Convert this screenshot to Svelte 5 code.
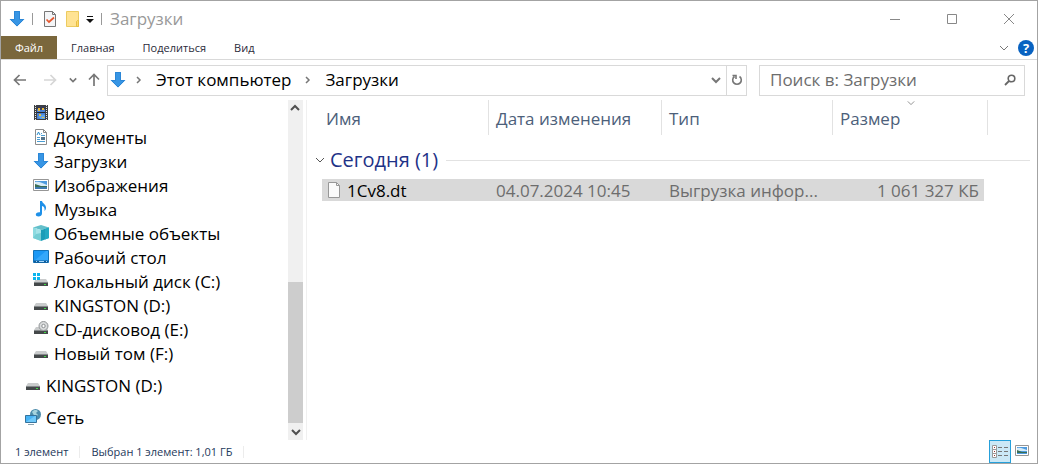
<script>
  const tabs = ['Главная', 'Поделиться', 'Вид'];
  const places = [
    { icon: 'video', name: 'Видео' },
    { icon: 'document', name: 'Документы' },
    { icon: 'download', name: 'Загрузки' },
    { icon: 'picture', name: 'Изображения' },
    { icon: 'music', name: 'Музыка' },
    { icon: 'cube', name: 'Объемные объекты' },
    { icon: 'desktop', name: 'Рабочий стол' },
    { icon: 'system', name: 'Локальный диск (C:)' },
    { icon: 'drive', name: 'KINGSTON (D:)' },
    { icon: 'cd', name: 'CD-дисковод (E:)' },
    { icon: 'drive', name: 'Новый том (F:)' }
  ];
  const roots = [
    { icon: 'drive', name: 'KINGSTON (D:)' },
    { icon: 'network', name: 'Сеть' }
  ];
  let query = $state('');
</script>

{#snippet driveBody()}
  <path d="M3 6h10l2 3H1z" fill="#c9cbcc" />
  <path d="M1 9h14v4H1z" fill="#44484a" />
  <path d="M1 9h14v1H1z" fill="#85898b" />
  <path d="M11 11h2v1h-2z" fill="#3fdc45" />
{/snippet}

{#snippet icon(name)}
  <svg class="icon" width="16" height="16" viewBox="0 0 16 16" aria-hidden="true">
    {#if name === 'download'}
      <path d="M5 0h6v8h4.500L8 15.500.5 8H5z" fill="#3795e4" />
      <path d="M5.500.5h5v8h4L8 15 1.500 8.500h4z" fill="none" stroke="#2b86d6" />
    {:else if name === 'video'}
      <path d="M1 0h14v15H1z" fill="#3c3f42" />
      <path d="M4 1h8v13H4z" fill="#4a7fd0" />
      <path d="M4 1h8v3l-4 1-4-1z" fill="#3a3c50" />
      <path d="M5 3h2v3H5zM9 3h2v2H9z" fill="#e8b83a" />
      <path d="M4 7h8v1H4z" fill="#22262c" />
      <path d="M5 12c2-3 5-3 7-2v4H8z" fill="#5fa3ea" />
      <path d="M6 9h2v2H6zM9 12h2v1H9z" fill="#e0c040" />
      <path d="M2.500 0v15M13.500 0v15" stroke="#e8e8e8" stroke-dasharray="1 1" />
    {:else if name === 'document'}
      <path d="M2.500.5h8l3 3v12h-11z" fill="#fff" stroke="#8c8c8c" />
      <path d="M10.500.5v3h3" fill="none" stroke="#8c8c8c" />
      <path d="M4 6l1.500-3L7 6" fill="none" stroke="#268ac9" />
      <path d="M8 4.500h1M8 6.500h4M4 8.500h3M4 10.500h3M4 12.500h8" stroke="#4a9dd3" />
      <path d="M8 8h4v3H8z" fill="#56748a" />
    {:else if name === 'picture'}
      <path d="M.5 2.500h15v11H.5z" fill="#fff" stroke="#969696" />
      <path d="M2 4h12v8H2z" fill="#4d9ade" />
      <path d="M2 5c4-1 7 1 12 3v1H2z" fill="#d6ebf8" />
      <path d="M2 7l3 1 3 1h6v1H2z" fill="#3b6e54" />
      <path d="M2 10h12v2H2z" fill="#3d79ae" />
    {:else if name === 'music'}
      <path d="M7 0h2c.5 2.500 4 3.500 4 6.500 0 1.500-.5 2.500-1.500 3.500.5-3-.5-4.500-2.500-5v7.500c0 2-1.500 3-3.500 3-1.700 0-2.700-.8-2.700-2s1.300-2.500 4.200-2.200z" fill="#1e90e8" />
    {:else if name === 'cube'}
      <path d="M0 2.500L8 0l8 2.500L8 5z" fill="#63bfca" />
      <path d="M0 2.500L8 5v11L0 13z" fill="#a5e3e8" />
      <path d="M0 2.500L3 3.500v10L0 13z" fill="#8cdae0" />
      <path d="M3 9l5-1v8l-8-3z" fill="#74cdd4" />
      <path d="M8 5l8-2.500V13l-8 3z" fill="#1a9db8" />
      <path d="M12 4l4-1.500V13l-4 1.500z" fill="#22a9c2" />
    {:else if name === 'desktop'}
      <path d="M.5 1.500h15v12H.5z" fill="#1b98f5" stroke="#1272b8" />
      <path d="M1 12L13 2h2v10H1z" fill="#34a8fb" />
      <path d="M1 11.500h14v2H1z" fill="#105995" />
      <path d="M3 12.500h1M6 12.500h5M13 12.500h1" stroke="#a8d9fb" />
    {:else if name === 'system'}
      {@render driveBody()}
      <path d="M0 0h7v7H0z" fill="#fff" />
      <path d="M0 0h3v3H0zM4 0h3v3H4zM0 4h3v3H0zM4 4h3v3H4z" fill="#0bb5ee" />
    {:else if name === 'drive'}
      {@render driveBody()}
    {:else if name === 'cd'}
      {@render driveBody()}
      <circle cx="10.500" cy="5" r="4.500" fill="#d9dbdc" stroke="#909496" />
      <circle cx="10.500" cy="5" r="1.700" fill="#fff" stroke="#8b8f91" />
    {:else if name === 'network'}
      <circle cx="10.500" cy="5.500" r="5.500" fill="#4c8cab" />
      <path d="M7 3c2-3 5-2 6-1l-2 2 2 2-3 2z" fill="#a6d3dd" />
      <path d="M.5 6.500h11v7H.5z" fill="#47b3f5" stroke="#34739d" />
      <path d="M1 13l9-6h1v6z" fill="#70c9fa" />
      <path d="M3 15.500h6" stroke="#8ba3b0" />
    {:else if name === 'file'}
      <path d="M2.500.5h8l3 3v12h-11z" fill="#fafafa" stroke="#979797" />
      <path d="M10.500.5v3h3" fill="none" stroke="#979797" />
    {:else if name === 'properties'}
      <path d="M2.500.5h8l3 3v12h-11z" fill="#f4f5f7" stroke="#777" />
      <path d="M10.500.5v3h3" fill="none" stroke="#777" />
      <path d="M4.500 8.500l2.500 2.500 5-4.500" fill="none" stroke="#e4572e" stroke-width="1.700" />
    {:else if name === 'folder'}
      <path d="M1.500.5h12v15h-12z" fill="#ffe393" stroke="#eccb60" />
      <path d="M12.500 9.500h1v6h-2v-5z" fill="#ffd968" stroke="#e6be45" />
    {/if}
  </svg>
{/snippet}

{#snippet chevron(size, weight)}
  <svg class="chevron" width={size} height="8" viewBox="0 0 10 8" aria-hidden="true">
    <path d="M1 2l4 4 4-4" fill="none" stroke="currentColor" stroke-width={weight} />
  </svg>
{/snippet}

{#snippet crumbArrow()}
  <svg width="8" height="10" viewBox="0 0 8 10" aria-hidden="true">
    <path d="M2 2l3 3-3 3" fill="none" stroke="#777" stroke-width="1.500" />
  </svg>
{/snippet}

<div class="window">
  <header class="title">
    <div class="quick">
      {@render icon('download')}
      <span class="bar"></span>
      <button class="first" aria-label="Свойства">{@render icon('properties')}</button>
      <button aria-label="Новая папка">{@render icon('folder')}</button>
      <button class="more" aria-label="Настройка панели быстрого доступа">
        <svg width="8" height="8" viewBox="0 0 8 8"><path d="M1 1h6v1H1zM0 4h8L4 8z" fill="#111" /></svg>
      </button>
      <span class="bar"></span>
    </div>
    <h1>Загрузки</h1>
    <div class="controls">
      <button aria-label="Свернуть">
        <svg width="12" height="12" viewBox="0 0 12 12"><path d="M1 6.500h10" stroke="#888" /></svg>
      </button>
      <button aria-label="Развернуть">
        <svg width="12" height="12" viewBox="0 0 12 12"><path d="M1.500 1.500h9v9h-9z" fill="none" stroke="#888" /></svg>
      </button>
      <button aria-label="Закрыть">
        <svg width="12" height="12" viewBox="0 0 12 12"><path d="M1 1l10 10M11 1L1 11" stroke="#888" /></svg>
      </button>
    </div>
  </header>

  <nav class="ribbon" aria-label="Лента">
    <button class="file">Файл</button>
    {#each tabs as tab}
      <button>{tab}</button>
    {/each}
    <div class="help">
      <button aria-label="Развернуть ленту">{@render chevron(10, 1)}</button>
      <button class="question" aria-label="Справка">?</button>
    </div>
  </nav>

  <div class="address">
    <div class="history">
      <button class="back" aria-label="Назад">
        <svg width="14" height="14" viewBox="0 0 14 14"><path d="M13 7H2M6.500 2L1.500 7l5 5" fill="none" stroke="#777" stroke-width="1.700" /></svg>
      </button>
      <button aria-label="Вперед" disabled>
        <svg width="14" height="14" viewBox="0 0 14 14"><path d="M1 7h11M7.500 2l5 5-5 5" fill="none" stroke="#d6d6d6" stroke-width="1.700" /></svg>
      </button>
      <button class="recent" aria-label="Последние расположения">{@render chevron(8, 2)}</button>
      <button aria-label="Вверх">
        <svg width="14" height="14" viewBox="0 0 14 14"><path d="M7 13V2M2 6.500l5-5 5 5" fill="none" stroke="#777" stroke-width="1.700" /></svg>
      </button>
    </div>
    <div class="path">
      {@render icon('download')}
      {@render crumbArrow()}
      <a href="#computer">Этот компьютер</a>
      {@render crumbArrow()}
      <a href="#downloads">Загрузки</a>
      <button class="drop" aria-label="Предыдущие расположения">{@render chevron(10, 2)}</button>
      <button class="refresh" aria-label="Обновить">
        <svg width="12" height="12" viewBox="0 0 12 12"><path d="M8.500 2.500a4.300 4.300 0 1 1-5 0M1.500 1.500h3.500V5" fill="none" stroke="#777" stroke-width="1.600" /></svg>
      </button>
    </div>
    <label class="search">
      <input type="text" bind:value={query} placeholder="Поиск в: Загрузки" aria-label="Поиск в: Загрузки" />
      <svg width="12" height="12" viewBox="0 0 12 12" aria-hidden="true">
        <circle cx="7.500" cy="4.500" r="3.300" fill="none" stroke="#666" stroke-width="1.600" />
        <path d="M5 7L1 11" stroke="#666" stroke-width="1.800" />
      </svg>
    </label>
  </div>

  <div class="body">
    <aside>
      <ul>
        {#each places as place}
          <li><a href="#place">{@render icon(place.icon)}{place.name}</a></li>
        {/each}
      </ul>
      <ul class="roots">
        {#each roots as place}
          <li><a href="#place">{@render icon(place.icon)}{place.name}</a></li>
        {/each}
      </ul>
    </aside>
    <div class="scroll">
      <button class="up" aria-label="Прокрутить вверх">{@render chevron(10, 2)}</button>
      <div class="track"></div>
      <div class="thumb"></div>
      <button aria-label="Прокрутить вниз">{@render chevron(10, 2)}</button>
    </div>

    <main>
      <table>
        <colgroup><col class="c-name" /><col class="c-date" /><col class="c-type" /><col class="c-size" /><col /></colgroup>
        <thead>
          <tr>
            <th scope="col">Имя</th>
            <th scope="col">Дата изменения</th>
            <th scope="col">Тип</th>
            <th scope="col" aria-sort="descending">Размер<span class="sort">{@render chevron(8, 1)}</span></th>
            <td></td>
          </tr>
        </thead>
        <tbody>
          <tr class="group">
            <th colspan="5" scope="rowgroup">
              <div>{@render chevron(12, 1)}<span>Сегодня (1)</span></div>
            </th>
          </tr>
          <tr class="selected">
            <td><div class="filename">{@render icon('file')}1Cv8.dt</div></td>
            <td>04.07.2024 10:45</td>
            <td>Выгрузка инфор...</td>
            <td class="size">1 061 327 КБ</td>
            <td></td>
          </tr>
        </tbody>
      </table>
    </main>
  </div>

  <footer>
    <span>1 элемент</span>
    <span>Выбран 1 элемент: 1,01 ГБ</span>
    <div class="views">
      <button class="active" aria-label="Таблица">
        <svg width="18" height="14" viewBox="0 0 18 14">
          <path d="M1.500.5h4v4h-4zM1.500 4.500h4v4h-4zM1.500 8.500h4v4h-4z" fill="#fff" stroke="#999" />
          <path d="M3 2h1v1H3zM3 6h1v1H3zM3 10h1v1H3z" fill="#933" />
          <path d="M7 2.500h4M13 2.500h4M7 6.500h4M13 6.500h4M7 10.500h4M13 10.500h4" stroke="#777" />
        </svg>
      </button>
      <button class="large" aria-label="Крупные значки">
        <svg width="14" height="12" viewBox="0 0 14 12">
          <path d="M.5.5h13v10H.5z" fill="#fff" stroke="#969696" />
          <path d="M2 2h10v7H2z" fill="#4d9ade" />
          <path d="M2 3c4-1 6 1 10 2v1H2z" fill="#d6ebf8" />
          <path d="M2 5l5 2h5v1H2z" fill="#3b6e54" />
        </svg>
      </button>
    </div>
  </footer>
</div>

<style>
  :global(body) {
    margin: 0;
    background: #fff;
  }
  .window {
    box-sizing: border-box;
    min-height: 100vh;
    display: flex;
    flex-direction: column;
    border: 1px solid #a3a3a3;
    background: #fff;
    color: #000;
    font: 17px/24px 'Open Sans', 'Noto Sans', sans-serif;
  }
  button {
    display: flex;
    align-items: center;
    justify-content: center;
    padding: 0;
    border: 0;
    background: none;
    color: #777;
    font: inherit;
  }
  a {
    color: inherit;
    text-decoration: none;
  }
  svg {
    display: block;
    flex: none;
  }
  .title {
    display: flex;
    align-items: center;
    height: 35px;
    padding-left: 8px;
  }
  .quick {
    display: flex;
    align-items: center;
    gap: 7px;
  }
  .bar {
    width: 1px;
    height: 12px;
    background: #999;
  }
  .first {
    margin-left: 2px;
  }
  .more {
    width: 8px;
    margin-left: -2px;
  }
  h1 {
    margin: 0 0 0 8px;
    font-size: 17px;
    font-weight: 400;
    color: #999;
  }
  .controls {
    display: flex;
    margin-left: auto;
  }
  .controls button {
    width: 57px;
    height: 34px;
  }
  .ribbon {
    display: flex;
    height: 23px;
    border-bottom: 1px solid #d9d9d9;
    font-size: 11px;
  }
  .ribbon > button {
    padding: 0 14px;
    color: #2b2b3a;
  }
  .ribbon > .file {
    width: 56px;
    padding: 0;
    background: #7a673c;
    color: #fff;
  }
  .help {
    display: flex;
    align-items: center;
    gap: 9px;
    margin-left: auto;
    padding-right: 3px;
  }
  .question {
    width: 16px;
    height: 16px;
    border-radius: 50%;
    background: #0862c1;
    color: #fff;
    font-size: 13px;
    font-weight: 700;
  }
  .address {
    display: flex;
    align-items: center;
    height: 40px;
    padding-right: 12px;
  }
  .history {
    display: flex;
    align-items: center;
    width: 88px;
    padding: 0 6px 0 12px;
  }
  .back {
    margin-right: 16px;
  }
  .recent {
    margin: 0 10px 0 12px;
  }
  .path,
  .search {
    box-sizing: border-box;
    display: flex;
    align-items: center;
    height: 31px;
    border: 1px solid #d9d9d9;
  }
  .path {
    flex: 1;
    padding-left: 2px;
    gap: 13px;
  }
  .path .icon {
    margin-right: -4px;
  }
  .drop {
    margin-left: auto;
    width: 16px;
    margin-right: -11px;
  }
  .refresh {
    width: 20px;
    height: 29px;
    border-left: 1px solid #d9d9d9;
  }
  .search {
    width: 266px;
    margin-left: 12px;
    padding: 0 8px 0 10px;
  }
  .search input {
    flex: 1;
    min-width: 0;
    padding: 0;
    border: 0;
    outline: 0;
    background: none;
    font: inherit;
    color: #000;
  }
  .search input::placeholder {
    color: #6d6d6d;
    opacity: 1;
  }
  .body {
    flex: 1;
    display: flex;
  }
  aside {
    width: 287px;
    padding: 2px 0 10px;
  }
  ul {
    margin: 0;
    padding: 0 0 0 32px;
    list-style: none;
  }
  .roots {
    padding-left: 24px;
  }
  .roots li {
    padding-top: 8px;
  }
  li a {
    display: flex;
    align-items: center;
    gap: 5px;
    height: 24px;
  }
  li .icon {
    margin-bottom: 2px;
  }
  .scroll {
    display: flex;
    flex-direction: column;
    width: 15px;
    margin-right: 3px;
    background: #f0f0f0;
  }
  .scroll button {
    height: 17px;
    color: #505050;
  }
  .up {
    transform: rotate(180deg);
  }
  .track {
    flex: 165;
  }
  .thumb {
    flex: 141;
    background: #cdcdcd;
  }
  main {
    flex: 1;
    min-width: 0;
    padding: 0 7px;
    border-left: 1px solid #f0f0f0;
  }
  table {
    width: 100%;
    table-layout: fixed;
    border-collapse: separate;
    border-spacing: 0;
  }
  .c-name { width: 175px; }
  .c-date { width: 173px; }
  .c-type { width: 171px; }
  .c-size { width: 155px; }
  th,
  td {
    box-sizing: border-box;
    padding: 0 0 0 7px;
    text-align: left;
    font-weight: 400;
    white-space: nowrap;
  }
  thead th {
    position: relative;
    height: 35px;
    padding-top: 2px;
    border-right: 1px solid #e2e2e2;
    color: #4c607a;
  }
  thead th:first-child {
    padding-left: 12px;
  }
  .sort {
    position: absolute;
    top: -1px;
    right: 72px;
    color: #777;
  }
  .group th {
    height: 44px;
    padding: 6px 0 0;
    color: #1e3287;
    font-size: 20px;
  }
  .group div {
    display: flex;
    align-items: center;
    gap: 4px;
  }
  .group div::after {
    content: '';
    flex: 1;
    height: 1px;
    margin-left: 4px;
    background: #e2e2e2;
  }
  .group .chevron {
    color: #555;
  }
  .selected td {
    height: 22px;
    padding-top: 1px;
    line-height: 21px;
    background: #d9d9d9;
    color: #6d6d6d;
  }
  .selected td:first-child {
    padding-left: 4px;
    border-left: 8px solid #fff;
    color: #000;
  }
  .selected td:last-child {
    background: none;
  }
  .selected .size {
    padding-right: 5px;
    border-right: 4px solid #fff;
    text-align: right;
  }
  .filename {
    display: flex;
    align-items: center;
    gap: 5px;
  }
  .filename .icon {
    margin-bottom: 2px;
  }
  footer {
    display: flex;
    align-items: center;
    height: 23px;
    padding-left: 3px;
    color: #1e395b;
    font-size: 11px;
  }
  footer span {
    padding: 0 11px;
    border-right: 1px solid #ececec;
    line-height: 12px;
  }
  .views {
    display: flex;
    align-items: center;
    margin-left: auto;
    padding-right: 4px;
  }
  .views button {
    width: 22px;
    height: 23px;
  }
  .views .active {
    border: 1px solid #26a0da;
    background: #cbe8f6;
  }
  .views .large {
    padding-bottom: 2px;
    height: 21px;
  }
</style>
